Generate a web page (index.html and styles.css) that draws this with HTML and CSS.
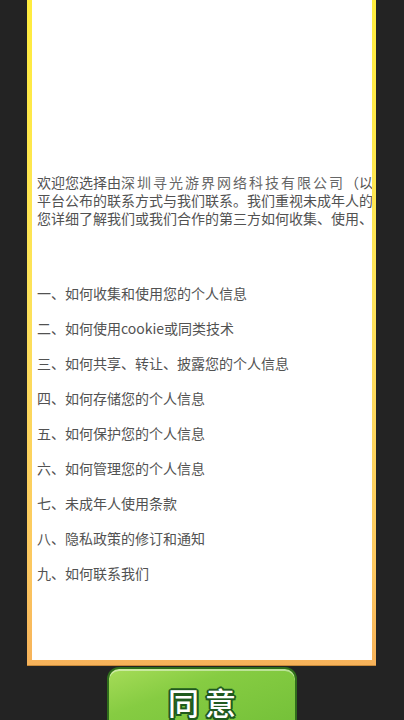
FILE: index.html
```html
<!DOCTYPE html>
<html lang="zh">
<head>
<meta charset="utf-8">
<title>隐私政策</title>
<link rel="stylesheet" href="styles.css">
</head>
<body>
<div class="screen">
  <div class="frame">
    <div class="sheet">
      <div class="intro">
        <p class="line">欢迎您选择由<span class="company">深圳寻光游界网络科技有限公司</span>（以下简称“我们”）提供的游戏服务。</p>
        <p class="line">平台公布的联系方式与我们联系。我们重视未成年人的个人信息保护。</p>
        <p class="line">您详细了解我们或我们合作的第三方如何收集、使用、存储和保护您的个人信息。</p>
      </div>
      <ul class="toc">
        <li>一、如何收集和使用您的个人信息</li>
        <li>二、如何使用cookie或同类技术</li>
        <li>三、如何共享、转让、披露您的个人信息</li>
        <li>四、如何存储您的个人信息</li>
        <li>五、如何保护您的个人信息</li>
        <li>六、如何管理您的个人信息</li>
        <li>七、未成年人使用条款</li>
        <li>八、隐私政策的修订和通知</li>
        <li>九、如何联系我们</li>
      </ul>
    </div>
  </div>
  <div class="actions">
    <button class="agree" type="button">同意</button>
  </div>
</div>
</body>
</html>
```
FILE: styles.css
```css
html, body {
  margin: 0;
  padding: 0;
  background: #232323;
  height: 100%;
  overflow: hidden;
}

.screen {
  width: 404px;
  height: 720px;
  overflow: hidden;
  display: flex;
  flex-direction: column;
  font-family: "Noto Sans CJK SC", "Noto Sans", sans-serif;
}

.frame {
  flex: 0 0 auto;
  margin-left: 27px;
  width: 349px;
  height: 665px;
  box-sizing: border-box;
  padding: 0 4px 5px 5px;
  background: linear-gradient(180deg, #ffec3e 0%, #fde25a 45%, #fcc860 85%, #f6b25a 100%);
  box-shadow: 0 1px 0 #c88a3a;
  display: flex;
}

.sheet {
  flex: 1;
  background: #ffffff;
  overflow: hidden;
  padding: 173px 0 0 5px;
  color: #525252;
  font-size: 14px;
}

.intro {
  margin: 0;
}

.line {
  margin: 0;
  line-height: 18px;
  white-space: nowrap;
}

.company {
  letter-spacing: 2px;
  color: #666;
}

.toc {
  list-style: none;
  margin: 49px 0 0;
  padding: 0;
}

.toc li {
  line-height: 35px;
  white-space: nowrap;
}

.actions {
  flex: 0 0 auto;
  display: flex;
  margin-top: 2px;
  padding-left: 107px;
}

.agree {
  width: 190px;
  height: 70px;
  box-sizing: border-box;
  border: 2px solid #2f6d1c;
  border-radius: 12px;
  background: linear-gradient(160deg, #a6dc58 0%, #86cc42 35%, #72bf38 100%);
  box-shadow: inset 0 2px 0 rgba(255,255,255,0.45), inset 0 -2px 0 rgba(0,0,0,0.1);
  padding: 18px 0 0 6px;
  margin: 0;
  display: flex;
  justify-content: center;
  align-items: flex-start;
  font-family: "Noto Sans CJK SC", sans-serif;
  font-size: 31px;
  font-weight: 500;
  line-height: 30px;
  letter-spacing: 6px;
  color: #ffffff;
  text-shadow:
    2px 0 0 #1f5a1e, -2px 0 0 #1f5a1e, 0 2px 0 #1f5a1e, 0 -2px 0 #1f5a1e,
    1.5px 1.5px 0 #1f5a1e, -1.5px 1.5px 0 #1f5a1e, 1.5px -1.5px 0 #1f5a1e, -1.5px -1.5px 0 #1f5a1e;
}
```
